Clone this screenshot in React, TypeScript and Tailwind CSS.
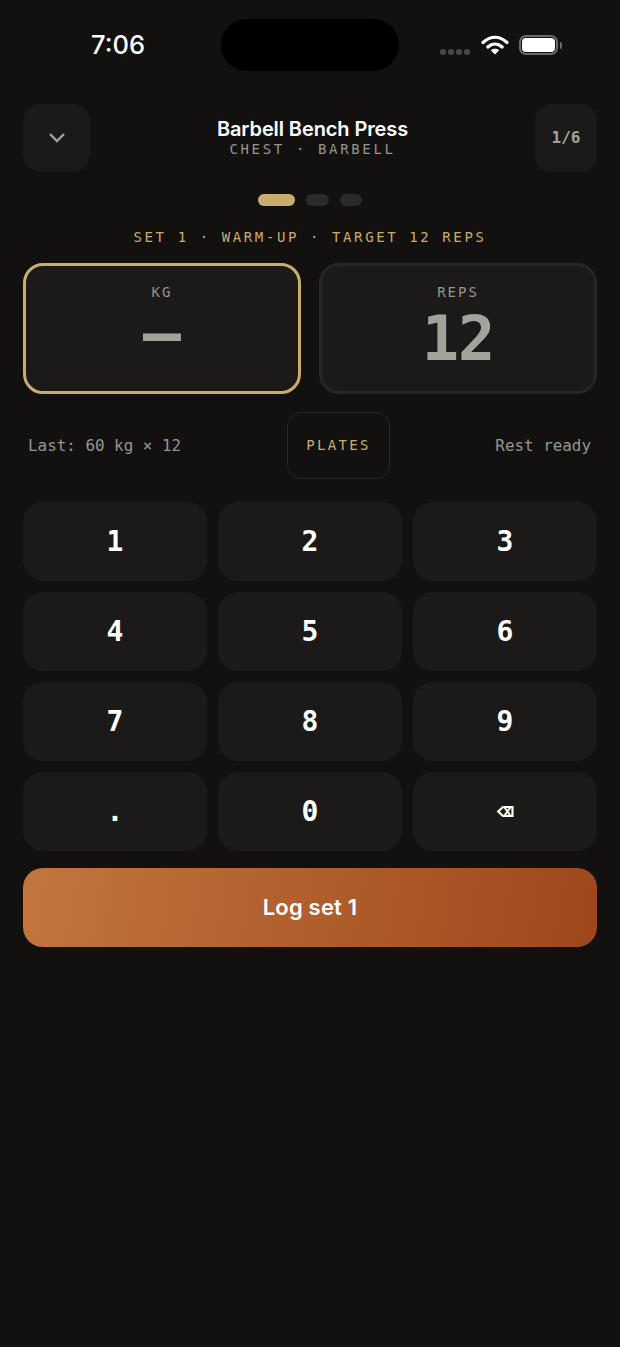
import React from "react";

const mono = "font-['DejaVu_Sans_Mono','Liberation_Mono',monospace]";
const sans = "font-['Inter','Liberation_Sans',sans-serif]";
const keys = ["1", "2", "3", "4", "5", "6", "7", "8", "9", ".", "0", "⌫"];

export default function App() {
  return (
    <div className={`w-[620px] h-[1347px] bg-[#121110] flex flex-col ${sans}`}>
      {/* status bar */}
      <div className="h-[104px] shrink-0 pt-[19px] grid grid-cols-[221px_178px_221px]">
        <div className="h-[52px] flex items-center pl-[91px] text-[25.5px] font-medium text-white">7:06</div>
        <div className="h-[52px] rounded-[26px] bg-black" />
        <div className="h-[52px] flex items-center pl-[41px]">
          <div className="flex gap-[2px] mt-[14px]">
            <span className="w-[6px] h-[6px] rounded-full bg-[#4a4a49]" />
            <span className="w-[6px] h-[6px] rounded-full bg-[#4a4a49]" />
            <span className="w-[6px] h-[6px] rounded-full bg-[#4a4a49]" />
            <span className="w-[6px] h-[6px] rounded-full bg-[#4a4a49]" />
          </div>
          <svg width="28" height="22" viewBox="0 0 28 22" className="ml-[11px]" fill="none">
            <path d="M2 8.5C9.5 1.5 18.5 1.5 26 8.5" stroke="#fff" strokeWidth="3.2" strokeLinecap="round" />
            <path d="M6.8 13C11.2 9 16.8 9 21.2 13" stroke="#fff" strokeWidth="3.2" strokeLinecap="round" />
            <path d="M14 20.5L9.8 16.2C12.2 14.2 15.8 14.2 18.2 16.2Z" fill="#fff" />
          </svg>
          <div className="ml-[10px] w-[39px] h-[20px] rounded-[7px] border-2 border-[#6b6b6a] p-[1px]">
            <div className="w-full h-full rounded-[4px] bg-white" />
          </div>
          <span className="ml-[2px] w-[2px] h-[7px] rounded-r-full bg-[#6b6b6a]" />
        </div>
      </div>

      <div className="flex flex-col px-[23px]">
        {/* header */}
        <div className="h-[68px] flex items-center">
          <div className="w-[67px] h-[68px] rounded-[18px] bg-[#1a1a19] flex items-center justify-center">
            <svg width="18" height="12" viewBox="0 0 18 12" fill="none">
              <path d="M2 2L9 9L16 2" stroke="#a3a29b" strokeWidth="2.4" />
            </svg>
          </div>
          <div className="flex-1 flex flex-col items-center">
            <div className="text-[20px] leading-[22px] font-semibold text-white tracking-[-0.1px] -mt-[1px]">Barbell Bench Press</div>
            <div className={`${mono} text-[14px] leading-[16px] mt-[1px] tracking-[2.65px] text-[#96958e] whitespace-pre`}>CHEST · BARBELL</div>
          </div>
          <div className={`${mono} w-[62px] h-[68px] rounded-[16px] bg-[#1a1a19] flex items-center justify-center text-[16px] font-bold text-[#a3a29b]`}>1/6</div>
        </div>

        {/* progress dots */}
        <div className="mt-[22px] h-[12px] flex justify-center gap-[11px]">
          <span className="w-[37px] rounded-full bg-[#c9ad6c]" />
          <span className="w-[23px] rounded-full bg-[#2a2a29]" />
          <span className="w-[22px] rounded-full bg-[#2a2a29]" />
        </div>

        <div className={`${mono} mt-[22px] h-[18px] leading-[18px] text-center text-[14px] tracking-[2.6px] text-[#c9ad6c]`}>SET 1 · WARM-UP · TARGET 12 REPS</div>

        {/* value cards */}
        <div className="mt-[17px] grid grid-cols-2 gap-[18px]">
          <div className="h-[131px] rounded-[20px] border-[3px] border-[#c9ad6c] bg-[#1b1a19] flex flex-col items-center pt-[17px]">
            <div className={`${mono} text-[14px] leading-[18px] tracking-[2px] text-[#96958e]`}>KG</div>
            <div className={`${mono} mt-[8px] h-[60px] leading-[50px] text-[63px] font-bold text-[#a3a29b]`}>—</div>
          </div>
          <div className="h-[131px] rounded-[20px] border-[3px] border-[#272625] bg-[#1b1a19] flex flex-col items-center pt-[17px]">
            <div className={`${mono} text-[14px] leading-[18px] tracking-[2px] text-[#96958e]`}>REPS</div>
            <div className={`${mono} mt-[8px] h-[60px] leading-[60px] text-[62px] font-bold text-[#a3a29b] tracking-[-1px]`}>12</div>
          </div>
        </div>

        {/* info row */}
        <div className={`${mono} mt-[18px] h-[67px] flex items-center justify-between pl-[5px] pr-[6px] text-[15.9px] text-[#96958e]`}>
          <span className="w-[259px]">Last: 60 kg × 12</span>
          <div className="w-[103px] h-[67px] rounded-[14px] border border-[#272625] flex items-center justify-center text-[14px] tracking-[2.3px] text-[#c9ad6c]">PLATES</div>
          <span className="flex-1 text-right">Rest ready</span>
        </div>

        {/* keypad */}
        <div className="mt-[23px] grid grid-cols-3 gap-x-[11px] gap-y-[11.5px]">
          {keys.map((k) => (
            <div
              key={k}
              className={`${mono} h-[78.5px] pt-[2px] rounded-[20px] bg-[#1b1a19] flex items-center justify-center font-bold text-white text-[28px]`}
            >
              {k}
            </div>
          ))}
        </div>

        <div className="mt-[17.5px] h-[79px] rounded-[20px] bg-[linear-gradient(100deg,#c2763d,#9f471c)] flex items-center justify-center text-[22px] font-semibold text-white tracking-[0.2px]">
          Log set 1
        </div>
      </div>
    </div>
  );
}
